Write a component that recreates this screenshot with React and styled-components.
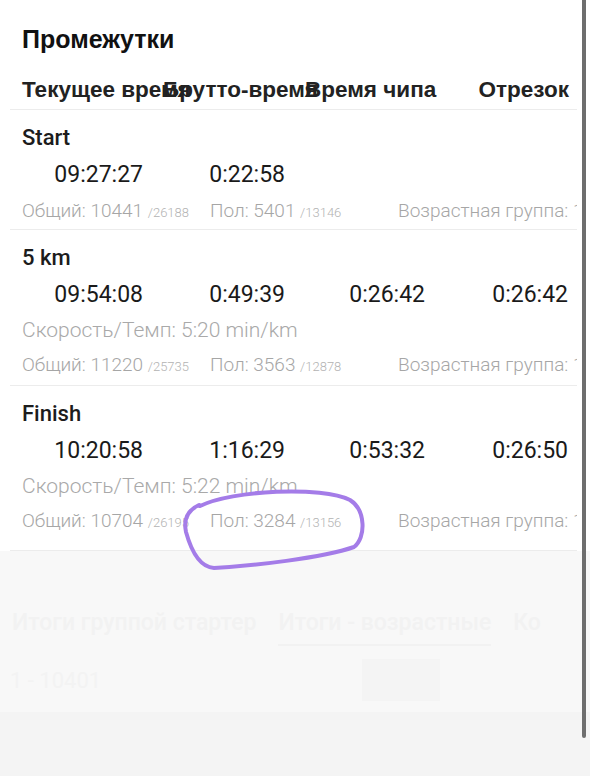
import React from 'react';
import styled, { createGlobalStyle } from 'styled-components';

const GlobalStyle = createGlobalStyle`
    html, body {
        margin: 0;
        padding: 0;
        background: #ffffff;
    }
    body {
        width: 590px;
        height: 776px;
        overflow: hidden;
        font-family: Roboto, "Noto Sans", sans-serif;
    }
`

const splits = [
    {
        name: 'Start',
        times: ['09:27:27', '0:22:58', '', ''],
        overall: ['10441', '26188'],
        gender: ['5401', '13146'],
        bottom: 0,
    },
    {
        name: '5 km',
        times: ['09:54:08', '0:49:39', '0:26:42', '0:26:42'],
        pace: '5:20 min/km',
        overall: ['11220', '25735'],
        gender: ['3563', '12878'],
        bottom: 2,
    },
    {
        name: 'Finish',
        times: ['10:20:58', '1:16:29', '0:53:32', '0:26:50'],
        pace: '5:22 min/km',
        overall: ['10704', '26195'],
        gender: ['3284', '13156'],
        bottom: 11,
    },
]

function App() {
    return (
        <Page>
            <GlobalStyle />
            <Panel>
                <Title>Промежутки</Title>
                <HeadRow>
                    <HeadCell>Текущее время</HeadCell>
                    <HeadCell>Брутто-время</HeadCell>
                    <HeadCell>Время чипа</HeadCell>
                    <HeadCell $right>Отрезок</HeadCell>
                </HeadRow>
                {splits.map((s) => (
                    <Split key={s.name} $bottom={s.bottom}>
                        <SplitName>{s.name}</SplitName>
                        <TimeRow>
                            {s.times.map((t, i) => <TimeCell key={i}>{t}</TimeCell>)}
                        </TimeRow>
                        {s.pace && <Pace>Скорость/Темп: {s.pace}</Pace>}
                        <StatRow>
                            <Stat>Общий: {s.overall[0]} <Total>/{s.overall[1]}</Total></Stat>
                            <Stat>Пол: {s.gender[0]} <Total>/{s.gender[1]}</Total></Stat>
                            <Stat>Возрастная группа: 1</Stat>
                        </StatRow>
                    </Split>
                ))}
            </Panel>
            <Sheet>
                <FadedTabs>
                    <FadedTab>Итоги группой стартер</FadedTab>
                    <FadedTab $active>Итоги - возрастные</FadedTab>
                    <FadedTab>Ко</FadedTab>
                </FadedTabs>
                <FadedRow>
                    <FadedText>1 - 10401</FadedText>
                    <FadedBox />
                </FadedRow>
                <SheetFoot />
            </Sheet>
            <Marker viewBox="0 0 590 776" width="590" height="776">
                <path
                    d="M 200 506 C 232 490, 322 486, 350 500 C 366 510, 366 538, 354 547 C 322 558, 252 566, 214 568 C 199 567, 191 550, 186 532 C 183 518, 188 510, 199 505"
                    fill="none"
                    stroke="#a47ce8"
                    strokeWidth="4"
                    strokeLinecap="round"
                    strokeLinejoin="round"
                />
            </Marker>
            <ScrollThumb />
        </Page>
    );
}

const Page = styled.div`
    position: relative;
    width: 590px;
    height: 776px;
    display: flex;
    flex-direction: column;
    overflow: hidden;
    background: #ffffff;
`

const Panel = styled.div`
    padding: 0 13px 0 10px;
    background: #ffffff;
`

const Title = styled.div`
    padding: 20px 0 0 12px;
    height: 38px;
    line-height: 38px;
    font-family: "Liberation Sans", Arial, sans-serif;
    font-weight: 700;
    font-size: 25px;
    color: #111111;
`

const HeadRow = styled.div`
    display: grid;
    grid-template-columns: 141px 142px 140px 1fr;
    padding: 15px 8px 2px 12px;
    height: 34px;
    line-height: 34px;
    border-bottom: 1px solid #ececec;
`

const HeadCell = styled.div`
    white-space: nowrap;
    font-family: "Liberation Sans", Arial, sans-serif;
    font-weight: 700;
    font-size: 22.5px;
    color: #222222;
    text-align: ${(props) => props.$right ? 'right' : 'left'};
`

const Split = styled.div`
    padding: 9px 0 ${(props) => props.$bottom}px 0;
    border-bottom: 1px solid #ececec;
    overflow: hidden;
`

const SplitName = styled.div`
    padding-left: 12px;
    height: 37px;
    line-height: 37px;
    font-size: 22px;
    font-weight: 500;
    color: #1c1c1c;
`

const TimeRow = styled.div`
    display: grid;
    grid-template-columns: 133px 142px 140px 143px;
    height: 37px;
    line-height: 37px;
`

const TimeCell = styled.div`
    text-align: right;
    font-size: 23px;
    font-weight: 400;
    color: #1a1a1a;
`

const Pace = styled.div`
    padding-left: 12px;
    height: 34px;
    line-height: 34px;
    font-size: 21px;
    font-weight: 300;
    color: #a9a9a9;
    white-space: nowrap;
`

const StatRow = styled.div`
    display: grid;
    grid-template-columns: 188px 188px 1fr;
    padding-left: 12px;
    height: 36px;
    line-height: 36px;
    white-space: nowrap;
    overflow: hidden;
`

const Stat = styled.div`
    height: 36px;
    font-size: 19px;
    font-weight: 300;
    color: #a6a6a6;
    overflow: hidden;
`

const Total = styled.span`
    font-size: 13px;
    color: #b3b3b3;
`

const Sheet = styled.div`
    flex: 1;
    display: flex;
    flex-direction: column;
    background: #f8f8f8;
    padding-top: 52px;
`

const FadedTabs = styled.div`
    display: flex;
    gap: 22px;
    padding-left: 12px;
    white-space: nowrap;
`

const FadedTab = styled.div`
    padding: 6px 0 8px;
    font-size: 23px;
    font-weight: 500;
    color: #f2f2f2;
    border-bottom: 2px solid ${(props) => props.$active ? '#f2f2f2' : 'transparent'};
`

const FadedRow = styled.div`
    display: flex;
    align-items: center;
    justify-content: space-between;
    padding: 12px 150px 0 10px;
    height: 44px;
`

const FadedText = styled.div`
    font-size: 22px;
    color: #f3f3f3;
`

const FadedBox = styled.div`
    width: 78px;
    height: 42px;
    background: #f4f4f4;
`

const SheetFoot = styled.div`
    margin-top: auto;
    height: 64px;
    background: #f4f4f4;
`

const Marker = styled.svg`
    position: absolute;
    top: 0;
    left: 0;
    pointer-events: none;
`

const ScrollThumb = styled.div`
    position: absolute;
    top: 0;
    right: 4px;
    width: 4px;
    height: 738px;
    background: #6e6e6e;
    border-radius: 0 0 2px 2px;
`

export default App;
